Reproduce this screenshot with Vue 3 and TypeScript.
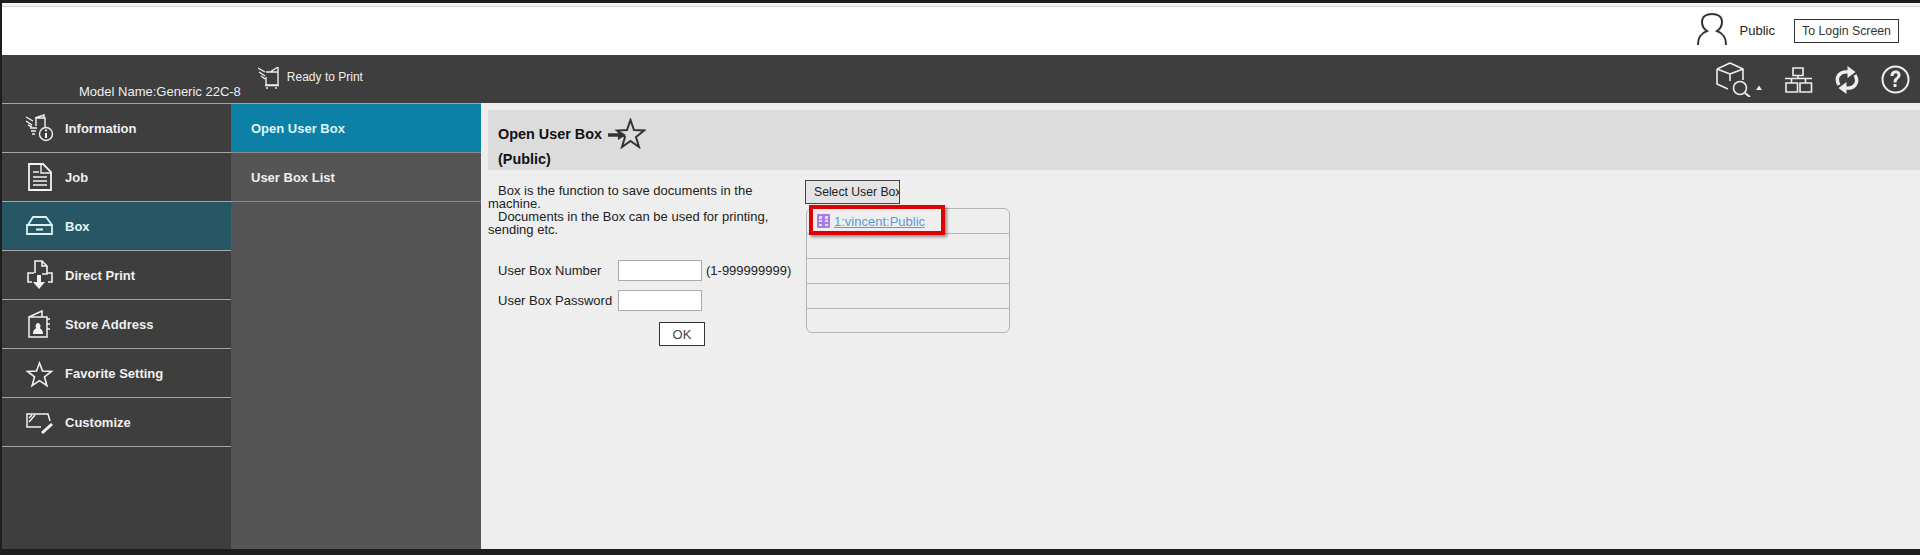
<script setup lang="ts">
interface NavItem { label: string; icon: string; active?: boolean }
const nav: NavItem[] = [
  { label: 'Information', icon: 'info' },
  { label: 'Job', icon: 'job' },
  { label: 'Box', icon: 'box', active: true },
  { label: 'Direct Print', icon: 'print' },
  { label: 'Store Address', icon: 'addr' },
  { label: 'Favorite Setting', icon: 'star' },
  { label: 'Customize', icon: 'custom' },
]
const rows = [1, 2, 3, 4]
</script>

<template>
  <div class="page">
    <div class="top">
      <svg class="person" width="32" height="34" viewBox="0 0 32 34" fill="none" stroke="#333" stroke-width="2">
        <path d="M2 32c0-9 4-12 9-14-3-2-5-5-5-9 0-5 4-8 10-8s10 3 10 8c0 4-2 7-5 9 5 2 9 5 9 14" />
      </svg>
      <span class="public">Public</span>
      <button class="login">To Login Screen</button>
    </div>
    <div class="head">
      <span class="model">Model Name:Generic 22C-8</span>
      <svg class="ready-ic" width="22" height="22" viewBox="0 0 22 22" fill="none" stroke="#eee" stroke-width="1.4">
        <path d="M8 5h12v13H8v-8M0 1l7 4M1 5l6 4M3 9l4 3M12 5l8-5v5" />
        <path d="M7 18.500h14M9 20v2M18 20v2" />
      </svg>
      <span class="ready">Ready to Print</span>
      <div class="tools">
        <svg width="50" height="35" viewBox="0 0 50 35" fill="none" stroke="#eee" stroke-width="1.6">
          <path d="M4 7l13-6 13 6v11M4 7v15l11 5M4 7l13 5 13-5M17 12v7" stroke-linejoin="round" />
          <circle cx="27" cy="26" r="6.500" />
          <path d="M32 31l5 4" stroke-width="2" />
          <path d="M49 28h-6l3-4.500z" fill="#eee" stroke="none" />
        </svg>
        <svg width="28" height="26" viewBox="0 0 28 26" fill="none" stroke="#eee" stroke-width="1.6">
          <path d="M8 1h10v7.500H8zM0 11.500h27M13 8.500v3M6.500 11.500V16M20.500 11.500V16M1 16h11.500v9H1zM15 16h11.500v9H15z" />
        </svg>
        <svg width="24" height="28" viewBox="0 0 24 28">
          <path d="M4 19C-.5 11 5 5 13 6" fill="none" stroke="#eee" stroke-width="3.400" />
          <path d="M20 9c4.500 8-1 14-9 13" fill="none" stroke="#eee" stroke-width="3.400" />
          <path d="M12.500 0l8 6-8 6zM11.500 16l-8 6 8 6z" fill="#eee" />
        </svg>
        <svg width="29" height="29" viewBox="0 0 29 29">
          <circle cx="14.500" cy="14.500" r="13" fill="none" stroke="#eee" stroke-width="2" />
          <path d="M9.500 11c0-7 10-7 10-1 0 4-4 3.500-4 7.500h-3c0-5 4-5 4-7.500 0-2.500-4-2.500-4 1z" fill="#eee" />
          <rect x="12.500" y="19" width="3" height="3" fill="#eee" />
        </svg>
      </div>
    </div>
    <div class="body">
      <nav class="side">
        <a v-for="n in nav" :key="n.label" class="side-item" :class="{ on: n.active }">
          <span class="ic">
            <svg width="30" height="30" viewBox="0 0 30 30" fill="none" :stroke="n.active ? '#d8f2f4' : '#f2f2f2'" stroke-width="1.4">
              <template v-if="n.icon === 'info'">
                <path d="M1 4l7 4M1 8l6 4M3 12l4 2M10 5l9-3v3M11 5h9v9M11 5v8" />
                <path d="M5 15h7M6 18h5M7 21h3" />
                <circle cx="21" cy="21" r="6.500" />
                <path d="M21 20v5M21 16.500v1.800" stroke-width="2" />
              </template>
              <template v-else-if="n.icon === 'job'">
                <path d="M4 2h14l8 8v18H4z" stroke-width="1.800" />
                <path d="M16 2v9h10M8 10h6M8 15h14M8 19h14M8 23h14" />
              </template>
              <template v-else-if="n.icon === 'box'">
                <path d="M3 14l5-8h13l6 8M2 14h25v9H2zM11 18.500h7" stroke-width="1.800" />
              </template>
              <template v-else-if="n.icon === 'print'">
                <path d="M10 13V1h7l5 5v8h-5M17 1v5h5" stroke-width="1.600" />
                <path d="M9 13H3v9h4M22 13h5v9h-4" stroke-width="1.600" />
                <path d="M12 15h4v7h4l-6 7-6-7h4z" fill="#f2f2f2" stroke="none" />
              </template>
              <template v-else-if="n.icon === 'addr'">
                <path d="M4 8h18v20H4zM4 8l13-6v6M22 10h3M22 15h3M22 20h3" stroke-width="1.500" />
                <path d="M8 25c0-5 3-5 3-6a2.500 3 0 1 1 4 0c0 1 3 1 3 6z" fill="#f2f2f2" stroke="none" />
              </template>
              <template v-else-if="n.icon === 'star'">
                <path d="M14.500 5l3 8 9 .4-7 5.500 2.400 8.800-7.400-5-7.400 5 2.400-8.800-7-5.500 9-.4z" stroke-width="1.600" />
              </template>
              <template v-else>
                <path d="M16 20H2V7h21l2 7M4 15l6-7M4 11l3-3" stroke-width="1.500" />
                <path d="M17 26l10-9" stroke-width="3" />
              </template>
            </svg>
          </span>
          <span class="lbl">{{ n.label }}</span>
        </a>
      </nav>
      <div class="sub">
        <a class="sub-item cur">Open User Box</a>
        <a class="sub-item">User Box List</a>
      </div>
      <main class="main">
        <header class="title">
          <div class="t1">
            <span>Open User Box</span>
            <svg width="40" height="31" viewBox="0 0 40 31" fill="none">
              <path d="M2 17h11" stroke="#333" stroke-width="3.500" />
              <path d="M12 12l8 5-8 5z" fill="#333" />
              <path d="M24.500 2l3.500 10 10 .5-8 6.500 3 10-8.500-6-8.500 6 3-10-8-6.500 10-.5z" stroke="#333" stroke-width="2" />
            </svg>
          </div>
          <div class="t2">(Public)</div>
        </header>
        <div class="content">
          <div class="left">
            <p class="desc"><span class="ind">Box is the function to save documents in the machine.</span><br /><span class="ind">Documents in the Box can be used for printing, sending etc.</span></p>
            <div class="form-row">
              <label>User Box Number</label>
              <input class="inp" type="text" />
              <span class="range">(1-999999999)</span>
            </div>
            <div class="form-row">
              <label>User Box Password</label>
              <input class="inp" type="password" />
            </div>
            <button class="ok">OK</button>
          </div>
          <div class="right">
            <div class="select"><span>Select User Box</span></div>
            <div class="list">
              <div class="list-row first">
                <svg class="box-ic" width="13" height="14" viewBox="0 0 13 14">
                  <rect width="13" height="14" rx="1" fill="#a37fe0" />
                  <path d="M2 2h3v3H2zM8 2h3v3H8zM2 6h3v2H2zM8 6h3v2H8zM2 10h3v2H2zM8 10h3v2H8z" fill="#e4d8fa" />
                </svg>
                <a class="link">1:vincent:Public</a>
                <span class="mark"></span>
              </div>
              <div v-for="r in rows" :key="r" class="list-row"></div>
            </div>
          </div>
        </div>
      </main>
    </div>
  </div>
</template>

<style scoped>
.page {
  width: 1920px;
  height: 555px;
  box-sizing: border-box;
  padding: 3px 0 6px 2px;
  background: #1e1e1e;
  display: flex;
  flex-direction: column;
  font-family: "Liberation Sans", Arial, sans-serif;
  overflow: hidden;
}
.top {
  height: 52px;
  box-sizing: border-box;
  background: #fff;
  box-shadow: inset 0 3px #f4f4f4, inset 0 4px #d6d6d6;
  display: flex;
  align-items: center;
  padding-right: 21px;
  justify-content: flex-end;
}
.person { margin-right: 12px; margin-top: 2px; }
.public { font-size: 13px; color: #222; margin-right: 19px; margin-top: 3px; }
.login {
  width: 105px;
  height: 24px;
  margin-top: 3px;
  padding: 0;
  background: #fff;
  border: 1px solid #333;
  font: 12.3px "Liberation Sans", Arial, sans-serif;
  color: #333;
}
.head {
  height: 48px;
  background: #3e3e3e;
  display: flex;
  align-items: flex-start;
  color: #eee;
  position: relative;
}
.model { font-size: 13px; margin: 30px 0 0 77px; line-height: 14px; white-space: nowrap; }
.ready-ic { margin: 12px 0 0 17px; }
.ready { font-size: 12px; margin: 15px 0 0 7px; line-height: 14px; }
.tools {
  margin-left: auto;
  display: flex;
  align-items: center;
  gap: 22px;
  padding: 7px 10px 0 0;
}
.body { flex: 1; display: flex; min-height: 0; }
.side {
  width: 229px;
  background: #3e3e3e;
  border-top: 1px solid #a5a5a5;
  box-sizing: border-box;
}
.side-item {
  height: 49px;
  box-sizing: border-box;
  border-bottom: 1px solid #a5a5a5;
  display: flex;
  align-items: center;
  color: #f0f0f0;
  font-size: 13px;
  font-weight: 700;
}
.side-item.on { background: #275765; color: #e2f6f8; }
.ic { width: 63px; padding-left: 23px; box-sizing: border-box; display: flex; }
.sub {
  width: 250px;
  background: #555;
  border-top: 1px solid #a5a5a5;
  box-sizing: border-box;
}
.sub-item {
  display: flex;
  align-items: center;
  height: 49px;
  box-sizing: border-box;
  padding-left: 20px;
  border-bottom: 1px solid #8c8c8c;
  color: #f0f0f0;
  font-size: 13px;
  font-weight: 700;
}
.sub-item.cur { background: #0d80a7; color: #dff6fa; }
.main {
  flex: 1;
  background: #eee;
  padding: 7px 0 0 7px;
  box-sizing: border-box;
  color: #222;
}
.title {
  height: 60px;
  background: #dcdcdc;
  box-sizing: border-box;
  padding-left: 10px;
  font-size: 14.4px;
  font-weight: 700;
  color: #111;
}
.t1 { display: flex; align-items: flex-start; height: 41px; gap: 4px; padding-top: 16px; box-sizing: border-box; line-height: 16px; }
.t1 svg { margin-top: -8px; }
.t2 { line-height: 16px; }
.content { display: flex; font-size: 13px; }
.left { width: 317px; padding-top: 14px; }
.desc { margin: 0; width: 288px; line-height: 13px; }
.ind { display: inline; padding-left: 10px; }
.form-row { display: flex; align-items: center; height: 21px; margin-top: 9px; padding-left: 10px; }
.desc + .form-row { margin-top: 24px; }
.form-row label { width: 120px; }
.inp {
  width: 84px;
  height: 21px;
  box-sizing: border-box;
  border: 1px solid #aaa;
  background: #fff;
  padding: 0;
}
.range { margin-left: 4px; white-space: nowrap; }
.ok {
  display: block;
  margin: 11px 0 0 171px;
  width: 46px;
  height: 24px;
  padding: 0;
  background: #fff;
  border: 1px solid #333;
  font: 13px "Liberation Sans", Arial, sans-serif;
  color: #444;
}
.right { padding-top: 10px; }
.select {
  width: 95px;
  height: 24px;
  box-sizing: border-box;
  border: 1px solid #444;
  background: #e4e4e4;
  padding-left: 8px;
  line-height: 22px;
  font-size: 12.2px;
  color: #222;
  white-space: nowrap;
  overflow: hidden;
}
.list {
  width: 204px;
  margin: 4px 0 0 1px;
  box-sizing: border-box;
  border: 1px solid #b5b5b5;
  border-radius: 6px;
  height: 125px;
}
.list-row {
  height: 25px;
  box-sizing: border-box;
  border-bottom: 1px solid #b5b5b5;
  display: flex;
  align-items: center;
  position: relative;
  padding-left: 10px;
}
.list-row:last-child { border-bottom: 0; }
.box-ic { margin-right: 4px; }
.link { color: #5a9bd8; text-decoration: underline; font-size: 13px; }
.mark {
  position: absolute;
  left: 2px;
  top: -4px;
  width: 136px;
  height: 30px;
  box-sizing: border-box;
  border: 4px solid #e00000;
  box-shadow: 2px 2px 3px rgba(0, 0, 0, .4);
}
</style>
